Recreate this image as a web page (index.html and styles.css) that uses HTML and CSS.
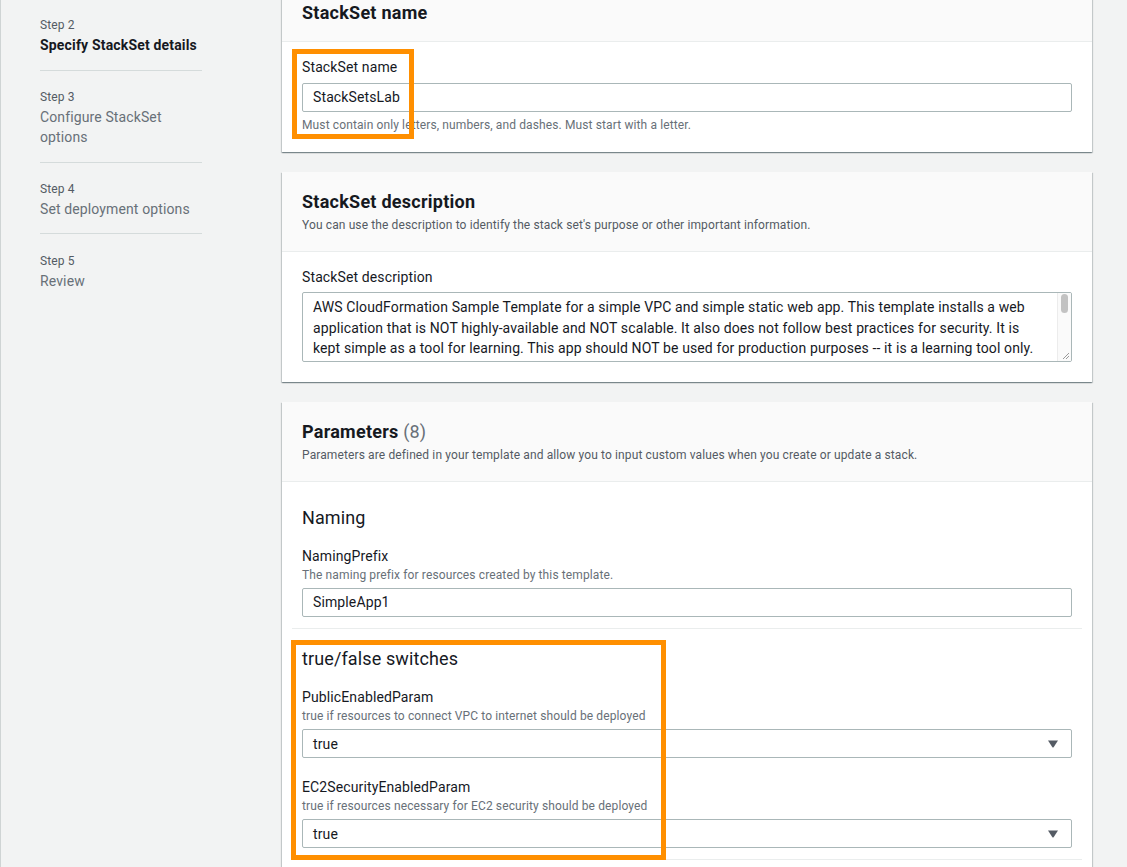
FILE: index.html
```html
<!DOCTYPE html>
<html lang="en">
<head>
<meta charset="utf-8">
<title>Specify StackSet details</title>
<link rel="stylesheet" href="styles.css">
</head>
<body>
<div class="page">
  <nav class="steps">
    <div class="steps-list">
      <div class="step step-active">
        <div class="step-label">Step 2</div>
        <div class="step-title">Specify StackSet details</div>
      </div>
      <div class="step">
        <div class="step-label">Step 3</div>
        <div class="step-title">Configure StackSet options</div>
      </div>
      <div class="step">
        <div class="step-label">Step 4</div>
        <div class="step-title">Set deployment options</div>
      </div>
      <div class="step">
        <div class="step-label">Step 5</div>
        <div class="step-title">Review</div>
      </div>
    </div>
  </nav>

  <main class="content">
    <section class="card card-first">
      <header class="card-head card-head-compact">
        <h2 class="card-title">StackSet name</h2>
      </header>
      <div class="card-body card-body-name">
        <label class="field-label">StackSet name</label>
        <div class="input">StackSetsLab</div>
        <div class="hint">Must contain only letters, numbers, and dashes. Must start with a letter.</div>
        <div class="highlight hl-name"></div>
      </div>
    </section>

    <section class="card">
      <header class="card-head">
        <h2 class="card-title">StackSet description</h2>
        <p class="card-desc">You can use the description to identify the stack set's purpose or other important information.</p>
      </header>
      <div class="card-body">
        <label class="field-label field-label-ta">StackSet description</label>
        <div class="textarea">
          <div class="ta-line">AWS CloudFormation Sample Template for a simple VPC and simple static web app. This template installs a web</div>
          <div class="ta-line">application that is NOT highly-available and NOT scalable. It also does not follow best practices for security. It is</div>
          <div class="ta-line">kept simple as a tool for learning. This app should NOT be used for production purposes -- it is a learning tool only.</div>
          <div class="ta-scroll"><div class="ta-thumb"></div></div>
          <svg class="ta-grip" width="8" height="8" viewBox="0 0 8 8"><path d="M7 1L1 7M7 4L4 7" stroke="#9a9a9a" stroke-width="1" fill="none"/></svg>
        </div>
      </div>
    </section>

    <section class="card">
      <header class="card-head">
        <h2 class="card-title">Parameters <span class="count">(8)</span></h2>
        <p class="card-desc">Parameters are defined in your template and allow you to input custom values when you create or update a stack.</p>
      </header>
      <div class="card-body params-body">
        <div class="param-group">
          <h3 class="group-title">Naming</h3>
          <div class="param">
            <label class="param-label">NamingPrefix</label>
            <div class="param-desc">The naming prefix for resources created by this template.</div>
            <div class="input">SimpleApp1</div>
          </div>
        </div>
        <div class="param-group">
          <h3 class="group-title">true/false switches</h3>
          <div class="param">
            <label class="param-label">PublicEnabledParam</label>
            <div class="param-desc">true if resources to connect VPC to internet should be deployed</div>
            <div class="select"><span>true</span><svg width="10" height="8" viewBox="0 0 10 8"><path d="M0 0.5H10L5.6 7.2Q5 8 4.4 7.2Z" fill="#545b64"/></svg></div>
          </div>
          <div class="param">
            <label class="param-label">EC2SecurityEnabledParam</label>
            <div class="param-desc">true if resources necessary for EC2 security should be deployed</div>
            <div class="select"><span>true</span><svg width="10" height="8" viewBox="0 0 10 8"><path d="M0 0.5H10L5.6 7.2Q5 8 4.4 7.2Z" fill="#545b64"/></svg></div>
          </div>
          <div class="highlight hl-switches"></div>
        </div>
      </div>
    </section>
  </main>
</div>
</body>
</html>
```

FILE: styles.css
```css
* { box-sizing: border-box; }

html, body { margin: 0; padding: 0; }

body {
  background: #f2f3f3;
  font-family: Roboto, "Liberation Sans", Arial, sans-serif;
  color: #16191f;
  letter-spacing: 0.12px;
  border-left: 1px solid #cfd4d4;
  height: 867px;
  overflow: hidden;
}

.page {
  display: flex;
  align-items: flex-start;
}

/* ---------- steps sidebar ---------- */
.steps {
  flex: none;
  width: 281px;
  padding-left: 39px;
}

.steps-list { width: 162px; }

.step {
  padding: 18.4px 0 14.2px;
  border-bottom: 1px solid #d5dbdb;
}
.step:first-child { padding-top: 17px; padding-bottom: 15px; }
.step:last-child { border-bottom: none; }

.step-label {
  font-size: 12px;
  line-height: 16px;
  color: #545b64;
  margin-bottom: 2px;
}

.step-title {
  font-size: 14px;
  line-height: 20px;
  color: #687078;
}

.step-active .step-title {
  color: #16191f;
  font-weight: 700;
  letter-spacing: 0.17px;
}

/* ---------- main content ---------- */
.content {
  flex: none;
  width: 810px;
  display: flex;
  flex-direction: column;
  gap: 20px;
  margin-top: -17px;
}

.card {
  background: #fff;
  position: relative;
  box-shadow: 0 1px 1px 0 rgba(0, 28, 36, 0.3),
              1px 1px 1px 0 rgba(0, 28, 36, 0.15),
              -1px 1px 1px 0 rgba(0, 28, 36, 0.15);
}

.card-head {
  background: #fafafa;
  border-bottom: 1px solid #eaeded;
  padding: 19px 20px 18px;
}
.card-head-compact { padding-bottom: 17px; }

.card-title {
  margin: 0;
  font-size: 18px;
  line-height: 22px;
  font-weight: 700;
  letter-spacing: 0.25px;
}

.count {
  font-weight: 400;
  color: #687078;
  letter-spacing: 0.12px;
}

.card-desc {
  margin: 4px 0 0;
  font-size: 12px;
  line-height: 16px;
  color: #545b64;
}

.card-body {
  position: relative;
  padding: 15px 20px 20px;
}
.card-body-name { padding-bottom: 19px; }

.field-label {
  display: block;
  font-size: 14px;
  line-height: 20px;
  margin-bottom: 6px;
}
.field-label-ta { margin-bottom: 5px; }

.input {
  height: 29px;
  border: 1px solid #aab7b8;
  border-radius: 2px;
  padding: 0 10px;
  font-size: 14px;
  line-height: 27px;
  background: #fff;
}

.hint {
  margin-top: 5px;
  font-size: 12px;
  line-height: 16px;
  color: #687078;
}

.textarea {
  position: relative;
  height: 70px;
  border: 1px solid #aab7b8;
  border-radius: 2px;
  padding: 4px 20px 0 10px;
  font-size: 14px;
  line-height: 20.5px;
  overflow: hidden;
}

.ta-line { white-space: nowrap; }

.ta-scroll {
  position: absolute;
  top: 0;
  right: 0;
  width: 14px;
  height: 100%;
  background: #fafafa;
  border-left: 1px solid #ececec;
}

.ta-thumb {
  margin: 1px auto 0 3px;
  width: 7px;
  height: 19px;
  border-radius: 4px;
  background: #c2c2c2;
}

.ta-grip {
  position: absolute;
  right: 1px;
  bottom: 1px;
}

/* ---------- parameters ---------- */
.params-body {
  padding: 6px 10px 40px;
}

.param-group {
  position: relative;
  padding: 18px 10px 11px;
  border-bottom: 1px solid #eaeded;
}

.group-title {
  margin: 0 0 16px;
  font-size: 18px;
  line-height: 24px;
  font-weight: 400;
}

.param + .param { margin-top: 19px; }

.param-label {
  display: block;
  font-size: 14px;
  line-height: 20px;
}

.param-desc {
  margin: 1px 0 5px;
  font-size: 12px;
  line-height: 16px;
  color: #687078;
}

.select {
  height: 29px;
  border: 1px solid #aab7b8;
  border-radius: 2px;
  padding: 0 13px 0 10px;
  display: flex;
  align-items: center;
  justify-content: space-between;
  font-size: 14px;
}

/* ---------- annotation boxes ---------- */
.highlight {
  position: absolute;
  border: 5px solid #ff8f00;
  pointer-events: none;
}

.hl-name {
  left: 10px;
  top: 7px;
  width: 122px;
  height: 90px;
}

.hl-switches {
  left: -1px;
  top: 11px;
  width: 375px;
  height: 220px;
}
```
